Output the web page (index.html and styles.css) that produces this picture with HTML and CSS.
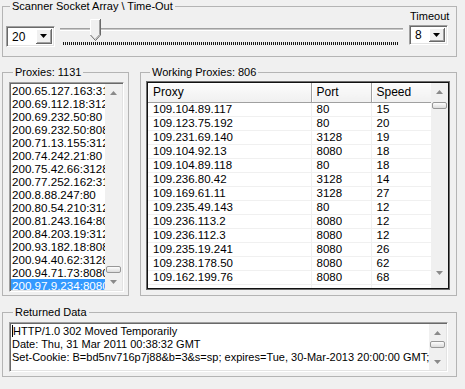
FILE: index.html
```html
<!DOCTYPE html>
<html lang="en">
<head>
    <meta charset="UTF-8">
    <title>Proxy Scanner</title>
    <link rel="stylesheet" href="styles.css">
</head>
<body>
    <div class="window">
        <fieldset class="group">
            <legend>Scanner Socket Array \ Time-Out</legend>
            <div class="scan-row">
                <div class="combo combo-threads">
                    <span class="combo-value">20</span>
                    <span class="combo-btn"><svg width="7" height="4" viewBox="0 0 7 4"><polygon points="0,0 7,0 3.5,4" fill="#000"/></svg></span>
                </div>
                <div class="slider">
                    <div class="slider-track"></div>
                    <svg class="slider-thumb" width="11" height="22" viewBox="0 0 11 22">
                        <path d="M0.5 21 V0.5 H10.5 V16 L5.5 21" fill="#f0f0f0"/>
                        <path d="M0.5 16 V0.5 H10" fill="none" stroke="#fff"/>
                        <path d="M10.5 0 V16 L5.5 21.5 L0.5 16" fill="none" stroke="#696969"/>
                        <path d="M9.5 1 V15.6 L5.5 20" fill="none" stroke="#a0a0a0"/>
                    </svg>
                    <div class="slider-ticks"></div>
                </div>
                <div class="timeout">
                    <div class="timeout-label">Timeout</div>
                    <div class="combo combo-timeout">
                        <span class="combo-value">8</span>
                        <span class="combo-btn"><svg width="7" height="4" viewBox="0 0 7 4"><polygon points="0,0 7,0 3.5,4" fill="#000"/></svg></span>
                    </div>
                </div>
            </div>
        </fieldset>

        <div class="lists">
            <fieldset class="group group-proxies">
                <legend>Proxies: 1131</legend>
                <div class="listbox">
                    <ul class="listbox-items">
                        <li>200.65.127.163:3128</li>
                        <li>200.69.112.18:3128</li>
                        <li>200.69.232.50:80</li>
                        <li>200.69.232.50:8080</li>
                        <li>200.71.13.155:3128</li>
                        <li>200.74.242.21:80</li>
                        <li>200.75.42.66:3128</li>
                        <li>200.77.252.162:3128</li>
                        <li>200.8.88.247:80</li>
                        <li>200.80.54.210:3128</li>
                        <li>200.81.243.164:8080</li>
                        <li>200.84.203.19:3128</li>
                        <li>200.93.182.18:8080</li>
                        <li>200.94.40.62:3128</li>
                        <li>200.94.71.73:8080</li>
                        <li class="selected">200.97.9.234:8080</li>
                    </ul>
                    <div class="scrollbar">
                        <span class="sb-btn"><svg width="7" height="4" viewBox="0 0 7 4"><polygon points="0,4 3.5,0 7,4" fill="#8a8a8a"/></svg></span>
                        <div class="sb-track"><span class="sb-thumb thumb-proxies"></span></div>
                        <span class="sb-btn"><svg width="7" height="4" viewBox="0 0 7 4"><polygon points="0,0 7,0 3.5,4" fill="#8a8a8a"/></svg></span>
                    </div>
                </div>
            </fieldset>

            <fieldset class="group group-working">
                <legend>Working Proxies: 806</legend>
                <div class="listview">
                    <div class="listview-body">
                        <table class="lv-table">
                            <colgroup>
                                <col class="col-proxy">
                                <col class="col-port">
                                <col class="col-speed">
                            </colgroup>
                            <thead>
                                <tr><th>Proxy</th><th>Port</th><th>Speed</th></tr>
                            </thead>
                            <tbody>
                                <tr><td>109.104.89.117</td><td>80</td><td>15</td></tr>
                                <tr><td>109.123.75.192</td><td>80</td><td>20</td></tr>
                                <tr><td>109.231.69.140</td><td>3128</td><td>19</td></tr>
                                <tr><td>109.104.92.13</td><td>8080</td><td>18</td></tr>
                                <tr><td>109.104.89.118</td><td>80</td><td>18</td></tr>
                                <tr><td>109.236.80.42</td><td>3128</td><td>14</td></tr>
                                <tr><td>109.169.61.11</td><td>3128</td><td>27</td></tr>
                                <tr><td>109.235.49.143</td><td>80</td><td>12</td></tr>
                                <tr><td>109.236.113.2</td><td>8080</td><td>12</td></tr>
                                <tr><td>109.236.112.3</td><td>8080</td><td>12</td></tr>
                                <tr><td>109.235.19.241</td><td>8080</td><td>26</td></tr>
                                <tr><td>109.238.178.50</td><td>8080</td><td>62</td></tr>
                                <tr><td>109.162.199.76</td><td>8080</td><td>68</td></tr>
                                <tr><td></td><td></td><td></td></tr>
                            </tbody>
                        </table>
                    </div>
                    <div class="scrollbar scrollbar-lv">
                        <span class="sb-btn"><svg width="7" height="4" viewBox="0 0 7 4"><polygon points="0,4 3.5,0 7,4" fill="#8a8a8a"/></svg></span>
                        <div class="sb-track"><span class="sb-thumb thumb-working"></span></div>
                        <span class="sb-btn"><svg width="7" height="4" viewBox="0 0 7 4"><polygon points="0,0 7,0 3.5,4" fill="#8a8a8a"/></svg></span>
                    </div>
                </div>
            </fieldset>
        </div>

        <fieldset class="group group-data">
            <legend>Returned Data</legend>
            <div class="textbox">
                <div class="textbox-text">
                    <div><span class="caret"></span>HTTP/1.0 302 Moved Temporarily</div>
                    <div>Date: Thu, 31 Mar 2011 00:38:32 GMT</div>
                    <div>Set-Cookie: B=bd5nv716p7j88&amp;b=3&amp;s=sp; expires=Tue, 30-Mar-2013 20:00:00 GMT;</div>
                </div>
                <div class="scrollbar">
                    <span class="sb-btn"><svg width="7" height="4" viewBox="0 0 7 4"><polygon points="0,4 3.5,0 7,4" fill="#8a8a8a"/></svg></span>
                    <div class="sb-track"><span class="sb-thumb"></span></div>
                    <span class="sb-btn"><svg width="7" height="4" viewBox="0 0 7 4"><polygon points="0,0 7,0 3.5,4" fill="#8a8a8a"/></svg></span>
                </div>
            </div>
        </fieldset>
    </div>
</body>
</html>
```

FILE: styles.css
```css
body {
    margin: 0;
    background-color: #f0f0f0;
    color: #000;
    font: 11px "Liberation Sans", Arial, sans-serif;
}

.window {
    width: 455px;
    padding-left: 2px;
}

/* group boxes */
.group {
    margin: 0;
    padding: 0 8px 9px 3px;
    min-width: 0;
    border: 1px solid #b4b4b4;
}
.group legend {
    margin-left: 4px;
    padding: 0 2px;
    line-height: 13px;
}

.scan-row {
    display: flex;
    align-items: flex-start;
}

/* combo boxes */
.combo {
    display: flex;
    align-items: center;
    justify-content: space-between;
    background-color: #fff;
    border-top: 1px solid #a0a0a0;
    border-left: 1px solid #a0a0a0;
    border-right: 1px solid #fff;
    border-bottom: 1px solid #fff;
    box-shadow: inset 1px 1px 0 #696969, inset -1px -1px 0 #e3e3e3;
    box-sizing: border-box;
    padding: 2px;
}
.combo-value {
    padding-left: 3px;
    font-size: 12px;
}
.combo-btn {
    display: flex;
    align-items: center;
    justify-content: center;
    width: 16px;
    height: 100%;
    box-sizing: border-box;
    background-color: #f0f0f0;
    border-right: 1px solid #696969;
    border-bottom: 1px solid #696969;
    box-shadow: inset 1px 1px 0 #fff, inset -1px -1px 0 #a0a0a0;
}
.combo-threads {
    width: 49px;
    height: 21px;
    margin-top: 13px;
}
.combo-timeout {
    width: 39px;
    height: 20px;
    margin-top: 2px;
}

/* track bar */
.slider {
    position: relative;
    flex: 1;
    min-width: 0;
    height: 26px;
    margin: 6px 0 0 5px;
}
.slider-track {
    margin-top: 9px;
    height: 1px;
    border-top: 1px solid #a0a0a0;
    border-bottom: 1px solid #fff;
    background-color: #c8c8c8;
}
.slider-thumb {
    position: absolute;
    left: 30px;
    top: 0;
}
.slider-ticks {
    margin: 11px 5px 0 3px;
    height: 3px;
    background: repeating-linear-gradient(90deg, #1a1a1a 0 1px, transparent 1px 2px);
}

.timeout {
    width: 39px;
    margin-left: 6px;
}
.timeout-label {
    margin-top: -3px;
    padding-left: 1px;
    line-height: 13px;
}

/* middle lists */
.lists {
    display: flex;
    gap: 11px;
    margin-top: 9px;
}
.group-proxies {
    width: 127px;
    box-sizing: border-box;
    padding: 3px 4px 3px 6px;
}
.group-working {
    width: 317px;
    box-sizing: border-box;
    padding: 2px 6px 4px 5px;
}

.listbox,
.listview,
.textbox {
    display: flex;
    background-color: #fff;
    border-top: 1px solid #a0a0a0;
    border-left: 1px solid #a0a0a0;
    border-right: 1px solid #fff;
    border-bottom: 1px solid #fff;
    box-shadow: inset 1px 1px 0 #696969, inset -1px -1px 0 #e3e3e3;
    padding: 1px;
    overflow: hidden;
}

.listbox {
    width: 115px;
    height: 210px;
    box-sizing: border-box;
}
.listbox-items {
    flex: 1;
    min-width: 0;
    margin: 0;
    padding: 0;
    list-style: none;
    overflow: hidden;
}
.listbox-items li {
    height: 13px;
    line-height: 13px;
    padding-left: 1px;
    font-size: 11.6px;
    white-space: nowrap;
    overflow: hidden;
}
.listbox-items li.selected {
    background-color: #3399ff;
    color: #fff;
}

/* scroll bars */
.scrollbar {
    display: flex;
    flex-direction: column;
    width: 17px;
    flex-shrink: 0;
    background-color: #f0f0f0;
}
.sb-btn {
    display: flex;
    align-items: center;
    justify-content: center;
    height: 17px;
}
.sb-track {
    flex: 1;
    display: flex;
    flex-direction: column;
    align-items: center;
}
.sb-thumb {
    width: 13px;
    height: 5px;
    border: 1px solid #979797;
    border-radius: 2px;
    background: linear-gradient(#fdfdfd, #dcdcdc);
}
.thumb-proxies {
    margin-top: 165px;
}
.thumb-working {
    margin-top: 2px;
}

/* list view */
.listview {
    width: 304px;
    height: 209px;
    box-sizing: border-box;
    border: 1px solid #6d6d6d;
    box-shadow: inset 0 0 0 1px #111;
}
.listview-body {
    flex: 1;
    min-width: 0;
    overflow: hidden;
}
.lv-table {
    width: 283px;
    table-layout: fixed;
    border-collapse: collapse;
    font-size: 11px;
}
.col-proxy { width: 163px; }
.col-port { width: 60px; }
.col-speed { width: 60px; }
.lv-table th {
    height: 19px;
    padding: 0 0 0 5px;
    text-align: left;
    font-weight: normal;
    font-size: 12px;
    background: linear-gradient(#fcfcfc, #f0f0f0);
    border-right: 1px solid #a0a0a0;
    border-bottom: 1px solid #a0a0a0;
    box-shadow: inset 1px 1px 0 #fff;
    box-sizing: border-box;
}
.lv-table td {
    height: 13px;
    padding: 0 0 0 5px;
    line-height: 13px;
    font-size: 11.5px;
    border-right: 1px solid #f0f0f0;
    border-bottom: 1px solid #f0f0f0;
    white-space: nowrap;
    overflow: hidden;
}
.scrollbar-lv .sb-btn:last-child {
    margin-bottom: 7px;
}

/* returned data */
.group-data {
    margin-top: 10px;
    padding: 3px 8px 4px 6px;
}
.textbox {
    height: 50px;
    box-sizing: border-box;
}
.textbox-text {
    flex: 1;
    padding: 1px 0 0 1px;
    line-height: 13px;
    white-space: nowrap;
    overflow: hidden;
}
.caret {
    display: inline-block;
    width: 1px;
    height: 12px;
    background-color: #000;
    vertical-align: -2px;
}
```
